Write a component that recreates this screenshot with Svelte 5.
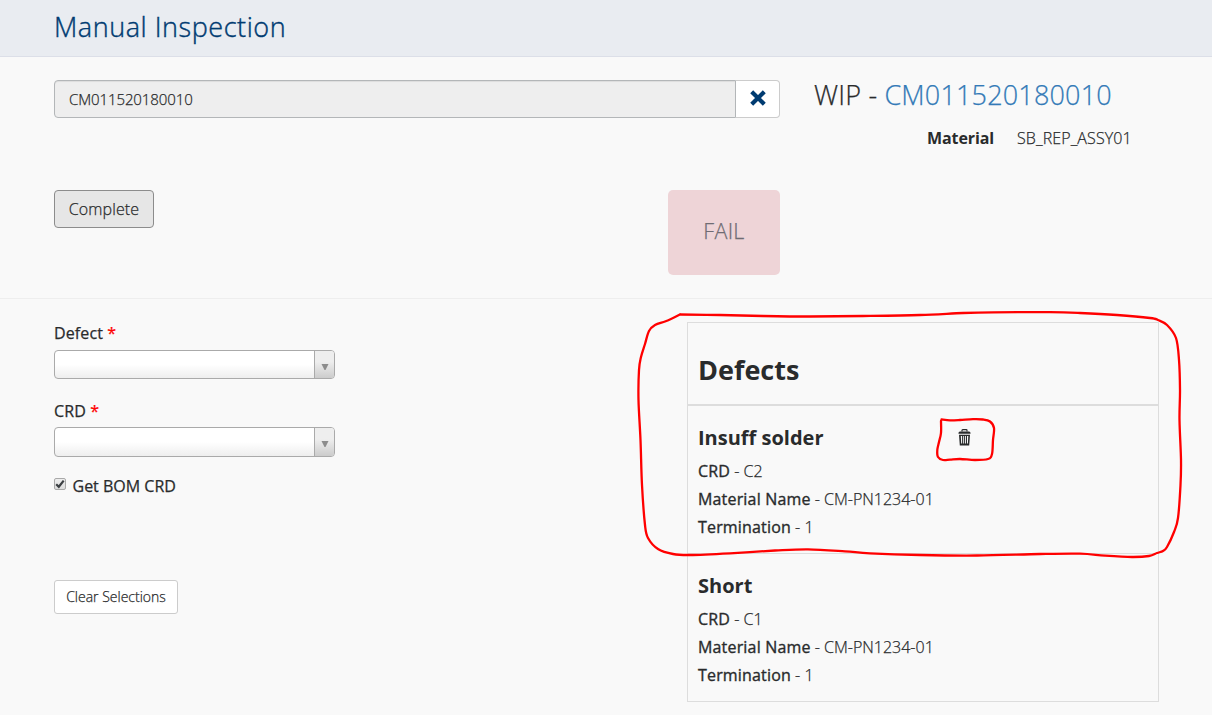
<script>
  const wip = 'CM011520180010';
  const fields = ['Defect', 'CRD'];
  const defects = [
    { name: 'Insuff solder', crd: 'C2', material: 'CM-PN1234-01', termination: 1, removable: true },
    { name: 'Short', crd: 'C1', material: 'CM-PN1234-01', termination: 1, removable: false }
  ];

  // Freehand annotation strokes, as canvas points
  const outline = [
    [680,314.5],[720,315],[763,316],[810,316.5],[863,316],[920,315],[963,313],[993,312.3],[1050,312.2],[1080,313],[1117,315],[1150,318],[1158,320],[1167,325],[1176,338],[1179,360],[1180,390],[1179.5,420],[1181,460],[1180.5,485],[1178,518],[1174,532],[1167,547],[1163,551],[1157,553],[1149,556],[1132,557],[1105,555.7],[1080,553.7],[1040,554],[977,555.5],[920,555],[870,553.3],[845,551.3],[808,549.3],[775,550.5],[730,553.3],[690,555],[673,554],[658,549],[648,538],[645,525],[642,485],[640.5,440],[638.5,400],[639,370],[641,357],[645,344],[649,331],[655,325],[665,321.5],[672,318.5],[680,314.5]
  ];
  const trashMark = [
    [941,421],[941,433],[939,442],[937.3,450],[938,457],[943,460],[950,459.7],[960,459],[975,460],[988,459],[992,454],[993,440],[994,428],[990,421.5],[983,419.5],[973,419.2],[960,420],[950,420.3],[941.5,419.5]
  ];

  function smooth(p) {
    let d = `M${p[0]}`;
    for (let i = 0; i < p.length - 1; i++) {
      const a = p[i - 1] ?? p[i], b = p[i], c = p[i + 1], e = p[i + 2] ?? c;
      d += `C${b[0] + (c[0] - a[0]) / 6} ${b[1] + (c[1] - a[1]) / 6} ${c[0] - (e[0] - b[0]) / 6} ${c[1] - (e[1] - b[1]) / 6} ${c[0]} ${c[1]}`;
    }
    return d;
  }
</script>

<div class="page">
  <header><h1>Manual Inspection</h1></header>

  <section class="top">
    <div class="scan">
      <div class="group">
        <div class="input">{wip}</div>
        <button class="clear" aria-label="Clear">
          <svg width="18" height="18" viewBox="0 0 18 18"><path d="M2.7 2.8 15.3 15.2M15.3 2.8 2.7 15.2" stroke="#003b71" stroke-width="4.2" /></svg>
        </button>
      </div>
      <div class="actions">
        <button class="complete">Complete</button>
        <div class="fail">FAIL</div>
      </div>
    </div>
    <div class="info">
      <h2>WIP - <a href="#wip">{wip}</a></h2>
      <div class="material"><b>Material</b><span>SB_REP_ASSY01</span></div>
    </div>
  </section>

  <section class="bottom">
    <div class="form">
      {#each fields as f}
        <div class="field">
          <div class="label">{f} <i>*</i></div>
          <div class="select"><span class="arrow"><svg width="8" height="8" viewBox="0 0 8 8"><path d="M.5 1h7L4.5 7h-1z" fill="#8c8c8c" /></svg></span></div>
        </div>
      {/each}
      <div class="check">
        <span class="box"><svg width="10" height="10" viewBox="0 0 10 10"><path d="M1.2 5.2 3.8 7.8 8.7 1.6" fill="none" stroke="#3c4043" stroke-width="2.2" /></svg></span>
        <span>Get BOM CRD</span>
      </div>
      <button class="reset">Clear Selections</button>
    </div>

    <div class="table">
      <div class="thead">Defects</div>
      {#each defects as d}
        <div class="row">
          <div class="details">
            <h3>{d.name}</h3>
            <p><b>CRD</b> - {d.crd}</p>
            <p><b>Material Name</b> - {d.material}</p>
            <p><b>Termination</b> - {d.termination}</p>
          </div>
          {#if d.removable}
            <svg class="trash" width="13" height="17" viewBox="0 0 13 17">
              <path d="M4 2.6V1.4Q4 .7 4.7.7h3.6q.7 0 .7.7v1.2" fill="none" stroke="#292b2c" stroke-width="1.2" />
              <path d="M.4 4.7Q.4 2.4 2 2.4h9q1.6 0 1.6 2.3z" fill="#292b2c" />
              <path fill-rule="evenodd" d="M1 5.7h11l-.8 10.7H1.8zM2.8 7l.4 7.5h.9V7zM5.2 7v7.5h.9V7zM7 7v7.5h.9V7zM9 7v7.5h.9L10.3 7z" fill="#292b2c" />
            </svg>
          {/if}
        </div>
      {/each}
    </div>
  </section>

  <svg class="ink" width="1212" height="715" viewBox="0 0 1212 715">
    <path d={smooth(outline)} />
    <path d={smooth(trashMark)} />
  </svg>
</div>

<style>
  :global(body) { margin: 0; background: #f9f9f9; }
  .page {
    position: relative; width: 1212px; height: 715px; overflow: hidden; box-sizing: border-box;
    background: #f9f9f9; color: #292b2c; font: 300 16px/28px "Open Sans", sans-serif;
    -webkit-text-stroke: .25px currentColor;
  }
  .page :global(*) { box-sizing: border-box; }
  h1, h2, h3, p { margin: 0; font-weight: 300; }
  button { font: inherit; color: inherit; padding: 0; }
  header { height: 57px; padding-left: 54px; background: #e9ecf1; border-bottom: 1px solid #dcdfe8; }
  h1 { font-size: 27px; line-height: 54px; color: #003b71; letter-spacing: .55px; -webkit-text-stroke-width: .4px; }
  .top { display: flex; height: 242px; padding: 23px 0 0 54px; border-bottom: 1px solid #eee; }
  .scan { width: 726px; }
  .group { display: flex; height: 38px; }
  .input {
    flex: 1; padding-left: 14px; font-size: 15px; line-height: 37px; background: #eee; border: 1px solid #b3b6b8;
    border-radius: 4px 0 0 4px; box-shadow: inset 0 1px 1px rgba(0,0,0,.075); letter-spacing: -.1px;
  }
  .clear {
    display: flex; align-items: center; justify-content: center; width: 44px; padding-bottom: 2px; background: #fff;
    border: 1px solid #ccc; border-left: 0; border-radius: 0 4px 4px 0;
  }
  .actions { display: flex; justify-content: space-between; align-items: flex-start; margin-top: 72px; }
  .complete { width: 100px; height: 38px; border: 1px solid #8c8c8c; border-radius: 4px; background: #e6e6e6; letter-spacing: .1px; }
  .fail { width: 112px; height: 85px; border-radius: 5px; background: #eed4d7; color: #6f6c73; font-size: 21.5px; line-height: 81px; text-align: center; letter-spacing: .3px; }
  .info { margin-left: 34px; width: 340px; }
  h2 { font-size: 27px; line-height: 30px; white-space: nowrap; letter-spacing: .17px; }
  h2 a { color: #337ab7; text-decoration: none; }
  .material { display: flex; gap: 23px; margin-top: 14px; padding-left: 113px; }
  .material span { letter-spacing: .1px; }
  .material b { font-weight: 700; letter-spacing: -.1px; -webkit-text-stroke-width: 0; }
  .bottom { display: flex; justify-content: space-between; padding: 23px 53px 0 54px; }
  .form { width: 281px; }
  .field { height: 77px; }
  .label { line-height: 23px; margin-bottom: 5px; font-weight: 400; letter-spacing: .12px; }
  .label i { color: #f00; font-style: normal; }
  .select {
    display: flex; justify-content: flex-end; height: 29px; border: 1px solid #aaa; border-radius: 4px;
    background: linear-gradient(#fff 50%, #eee); overflow: hidden;
  }
  .field + .field .select { height: 30px; }
  .field + .field .label { padding-top: 1px; margin-bottom: 4px; }
  .arrow { display: flex; align-items: center; justify-content: center; width: 20px; padding-top: 4px; border-left: 1px solid #aaa; background: linear-gradient(#eee 40%, #ccc); }
  .check { display: flex; gap: 6.5px; height: 22px; line-height: 20px; font-weight: 400; }
  .box {
    display: flex; align-items: center; justify-content: center; width: 12px; height: 12px; margin-top: 2px;
    border: 1px solid #a9a9a9; border-radius: 2px; background: linear-gradient(#eee, #ddd);
  }
  .reset { margin-top: 82px; width: 124px; height: 34px; background: #fff; border: 1px solid #ccc; border-radius: 3px; font-size: 14px; }
  .table { width: 472px; height: 380px; border: 1px solid #ddd; }
  .thead { height: 83px; padding: 10px 10px 0; border-bottom: 2px solid #ddd; font-size: 27px; line-height: 74px; font-weight: 700; -webkit-text-stroke-width: 0; }
  .row { display: flex; height: 147px; padding: 18px 10px 0; }
  .row + .row { height: 148px; border-top: 1px solid #ddd; }
  .details { width: 260px; }
  .details p b { font-weight: 400; letter-spacing: .17px; -webkit-text-stroke-width: .35px; }
  h3 { font-size: 20px; line-height: 28px; margin-bottom: 5px; font-weight: 700; -webkit-text-stroke-width: 0; }
  .trash { margin-top: 5px; }
  .ink { position: absolute; inset: 0; pointer-events: none; }
  .ink path { fill: none; stroke: #f00; stroke-width: 2.3; stroke-linecap: round; stroke-linejoin: round; }
</style>
